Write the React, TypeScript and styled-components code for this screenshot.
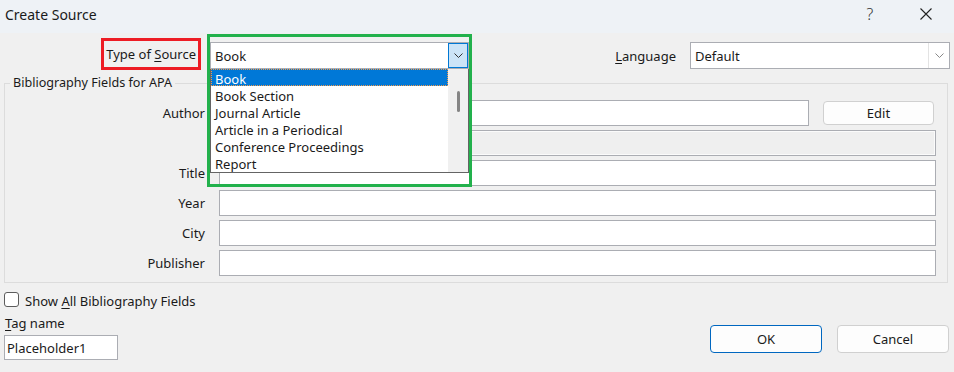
import React from "react";
import styled, { createGlobalStyle } from "styled-components";

const GlobalStyle = createGlobalStyle`
  html, body {
    margin: 0;
    padding: 0;
    background: #f0f0f0;
  }
  body {
    font-family: "Noto Sans", "Open Sans", sans-serif;
    font-size: 12px;
    color: #1a1a1a;
  }
`;

const Window = styled.div`
  width: 954px;
  height: 372px;
  background: #f0f0f0;
  display: flex;
  flex-direction: column;
  overflow: hidden;
`;

const TitleBar = styled.div`
  height: 33px;
  box-sizing: border-box;
  flex-shrink: 0;
  background: #eef2f6;
  display: flex;
  align-items: center;
  padding: 0 0 5px 5px;
`;

const TitleText = styled.span`
  font-size: 14px;
  color: #1a1a1a;
  flex: 1;
`;

const TitleButton = styled.div`
  width: 56px;
  height: 28px;
  display: flex;
  align-items: center;
  justify-content: center;
  font-size: 16px;
  font-weight: 300;
  color: #333;
`;

const TopRow = styled.div`
  display: flex;
  align-items: flex-start;
  margin-top: 5px;
  padding-right: 4px;
  height: 32px;
`;

const MarkedLabel = styled.div`
  margin-left: 101px;
  width: 100px;
  height: 32px;
  box-sizing: border-box;
  border: 3px solid #ed1c24;
  display: flex;
  align-items: center;
  justify-content: flex-end;
  padding-right: 2px;
  font-size: 13px;
`;

const Key = styled.span`
  text-decoration: underline;
  text-underline-offset: 2px;
`;

const ComboWrap = styled.div`
  position: relative;
  margin-left: 9px;
  margin-top: 4px;
  z-index: 2;

  &::after {
    content: "";
    position: absolute;
    left: -3px;
    top: -8px;
    width: 265px;
    height: 153px;
    box-sizing: border-box;
    border: 3px solid #22b14c;
    pointer-events: none;
  }
`;

const ComboWrapPlain = styled.div`
  margin-top: 4px;
`;

const Combo = styled.div<{ $width: number }>`
  width: ${(p) => p.$width}px;
  height: 27px;
  box-sizing: border-box;
  border: 1px solid #abadb3;
  background: #fff;
  display: flex;
  align-items: stretch;
  font-size: 13px;
`;

const ComboText = styled.div`
  flex: 1;
  display: flex;
  align-items: center;
  padding-left: 4px;
`;

const ArrowButton = styled.div<{ $active?: boolean }>`
  width: ${(p) => (p.$active ? 20 : 21)}px;
  box-sizing: border-box;
  display: flex;
  align-items: center;
  justify-content: center;
  background: ${(p) => (p.$active ? "#cce4f7" : "#fff")};
  border: ${(p) => (p.$active ? "1px solid #0078d4" : "none")};
  border-left: 1px solid ${(p) => (p.$active ? "#0078d4" : "#e3e3e3")};
`;

const DropList = styled.div`
  position: absolute;
  left: 0;
  top: 27px;
  width: 259px;
  height: 104px;
  box-sizing: border-box;
  border: 1px solid #646464;
  border-top: none;
  background: #fff;
  display: flex;
`;

const Items = styled.div`
  flex: 1;
  display: flex;
  flex-direction: column;
`;

const Item = styled.div<{ $selected?: boolean }>`
  height: 17px;
  box-sizing: border-box;
  display: flex;
  align-items: center;
  padding: 2px 0 0 3px;
  font-size: 13px;
  color: ${(p) => (p.$selected ? "#fff" : "#1a1a1a")};
  background: ${(p) => (p.$selected ? "#0078d7" : "transparent")};
  border: 1px dotted ${(p) => (p.$selected ? "#f29a4a" : "transparent")};
`;

const ScrollTrack = styled.div`
  width: 20px;
  background: #f0f0f0;
  display: flex;
  justify-content: center;
  padding-top: 22px;
  box-sizing: border-box;
`;

const ScrollThumb = styled.div`
  width: 3px;
  height: 21px;
  border-radius: 2px;
  background: #858585;
`;

const LangLabel = styled.span`
  margin-left: auto;
  margin-top: 4px;
  height: 27px;
  display: flex;
  align-items: center;
  margin-right: 14px;
  font-size: 13px;
`;

const Group = styled.fieldset`
  margin: 5px 6px 0 4px;
  padding: 9px 11px 6px 0;
  border: 1px solid #dcdcdc;
  min-width: 0;
`;

const Legend = styled.legend`
  margin-left: 5px;
  padding: 0 3px;
  font-size: 12.6px;
  line-height: 16px;
`;

const Fields = styled.div`
  display: grid;
  grid-template-columns: 200px 1fr;
  column-gap: 14px;
  row-gap: 4px;
`;

const FieldLabel = styled.div`
  display: flex;
  align-items: center;
  justify-content: flex-end;
  height: 26px;
  font-size: 13px;
`;

const FieldLine = styled.div`
  display: flex;
  align-items: center;
`;

const TextBox = styled.div<{ $disabled?: boolean }>`
  flex: 1;
  height: 26px;
  box-sizing: border-box;
  border: 1px solid #abadb3;
  background: ${(p) => (p.$disabled ? "#efefef" : "#fff")};
  box-shadow: ${(p) => (p.$disabled ? "inset 0 0 0 1px #fbfbfb" : "none")};
`;

const Button = styled.button<{ $primary?: boolean; $width: number; $height: number }>`
  width: ${(p) => p.$width}px;
  height: ${(p) => p.$height}px;
  box-sizing: border-box;
  border: 1px solid ${(p) => (p.$primary ? "#0067c0" : "#d0d0d0")};
  border-radius: 4px;
  background: #fdfdfd;
  font-family: inherit;
  font-size: 13px;
  color: #1a1a1a;
  padding: 0;
`;

const EditButton = styled(Button)`
  margin-left: 14px;
  margin-right: 2px;
`;

const Footer = styled.div`
  display: flex;
  justify-content: space-between;
  align-items: flex-end;
  margin-top: 9px;
  padding: 0 5px 0 4px;
`;

const FooterLeft = styled.div`
  display: flex;
  flex-direction: column;
`;

const CheckRow = styled.label`
  display: flex;
  align-items: center;
  gap: 6px;
  height: 15px;
  font-size: 13px;

  & > span:last-child {
    padding-top: 2px;
  }
`;

const CheckBox = styled.span`
  width: 15px;
  height: 15px;
  box-sizing: border-box;
  border: 1px solid #5c5c5c;
  border-radius: 3px;
  background: #fff;
`;

const TagLabel = styled.div`
  margin-top: 7px;
  margin-left: 1px;
  font-size: 13px;
  line-height: 18px;
`;

const TagInput = styled.div`
  margin-top: 3px;
  width: 114px;
  height: 25px;
  box-sizing: border-box;
  border: 1px solid #abadb3;
  background: #fff;
  display: flex;
  align-items: center;
  padding-left: 2px;
  font-size: 13px;
`;

const Actions = styled.div`
  display: flex;
  gap: 15px;
  margin-bottom: 7px;
`;

const Chevron = ({ color }: { color: string }) => (
  <svg width="9" height="5" viewBox="0 0 9 5">
    <path d="M0.5 0.5 L4.5 4.5 L8.5 0.5" fill="none" stroke={color} strokeWidth="1" />
  </svg>
);

const CloseIcon = () => (
  <svg width="12" height="12" viewBox="0 0 12 12">
    <path d="M0.5 0.5 L11.5 11.5 M11.5 0.5 L0.5 11.5" stroke="#222" strokeWidth="1.1" />
  </svg>
);

const sourceTypes = [
  "Book",
  "Book Section",
  "Journal Article",
  "Article in a Periodical",
  "Conference Proceedings",
  "Report",
];

const App = () => {
  return (
    <>
      <GlobalStyle />
      <Window>
        <TitleBar>
          <TitleText>Create Source</TitleText>
          <TitleButton>?</TitleButton>
          <TitleButton>
            <CloseIcon />
          </TitleButton>
        </TitleBar>

        <TopRow>
          <MarkedLabel>
            <span>
              Type of <Key>S</Key>ource
            </span>
          </MarkedLabel>
          <ComboWrap>
            <Combo $width={259}>
              <ComboText>Book</ComboText>
              <ArrowButton $active>
                <Chevron color="#333" />
              </ArrowButton>
            </Combo>
            <DropList>
              <Items>
                {sourceTypes.map((t, i) => (
                  <Item key={t} $selected={i === 0}>
                    {t}
                  </Item>
                ))}
              </Items>
              <ScrollTrack>
                <ScrollThumb />
              </ScrollTrack>
            </DropList>
          </ComboWrap>
          <LangLabel>
            <span>
              <Key>L</Key>anguage
            </span>
          </LangLabel>
          <ComboWrapPlain>
            <Combo $width={260}>
              <ComboText>Default</ComboText>
              <ArrowButton>
                <Chevron color="#888" />
              </ArrowButton>
            </Combo>
          </ComboWrapPlain>
        </TopRow>

        <Group>
          <Legend>Bibliography Fields for APA</Legend>
          <Fields>
            <FieldLabel>Author</FieldLabel>
            <FieldLine>
              <TextBox />
              <EditButton $width={111} $height={24}>
                Edit
              </EditButton>
            </FieldLine>
            <FieldLabel />
            <FieldLine>
              <TextBox $disabled />
            </FieldLine>
            {["Title", "Year", "City", "Publisher"].map((f) => (
              <React.Fragment key={f}>
                <FieldLabel>{f}</FieldLabel>
                <FieldLine>
                  <TextBox />
                </FieldLine>
              </React.Fragment>
            ))}
          </Fields>
        </Group>

        <Footer>
          <FooterLeft>
            <CheckRow>
              <CheckBox />
              <span>
                Show <Key>A</Key>ll Bibliography Fields
              </span>
            </CheckRow>
            <TagLabel>
              <Key>T</Key>ag name
            </TagLabel>
            <TagInput>Placeholder1</TagInput>
          </FooterLeft>
          <Actions>
            <Button $primary $width={112} $height={28}>
              OK
            </Button>
            <Button $width={112} $height={28}>
              Cancel
            </Button>
          </Actions>
        </Footer>
      </Window>
    </>
  );
};

export default App;
